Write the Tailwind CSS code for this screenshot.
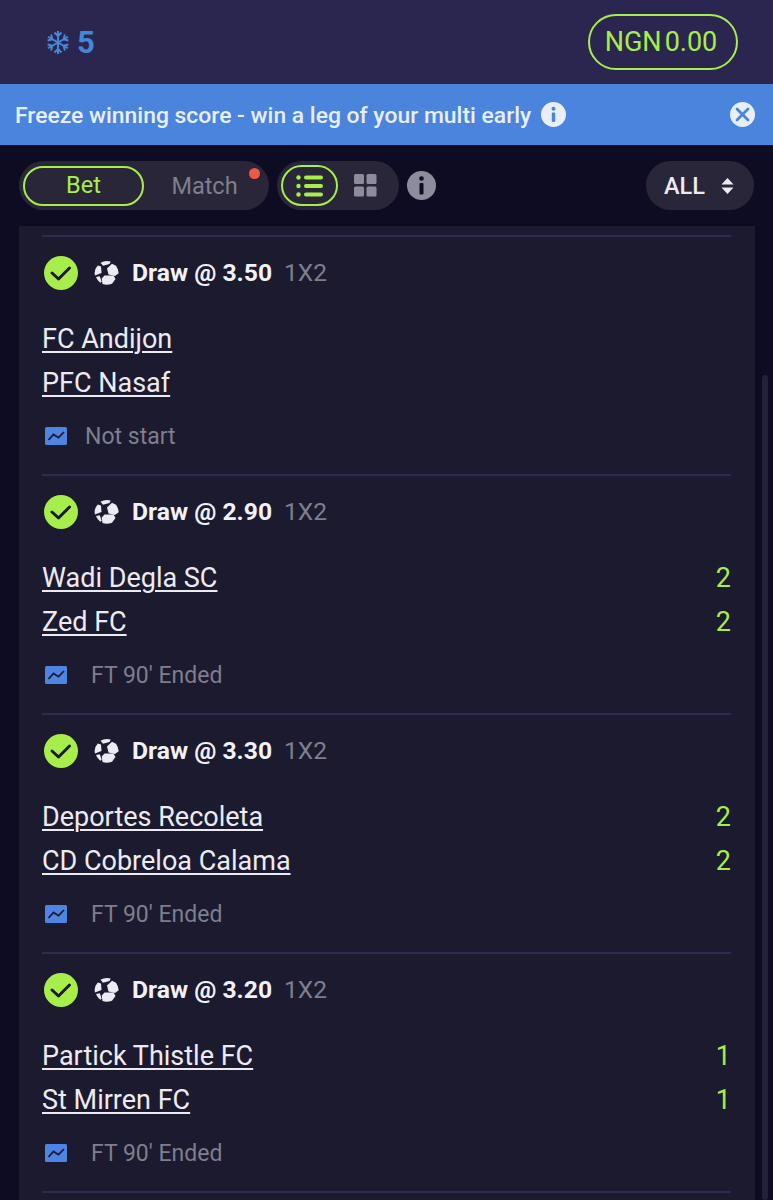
<!DOCTYPE html>
<html lang="en">
<head>
    <meta charset="UTF-8">
    <meta name="viewport" content="width=device-width, initial-scale=1.0">
    <title>My Bets</title>
    <script src="https://cdn.jsdelivr.net/npm/@tailwindcss/browser@4"></script>
</head>
<body class="bg-[#0e0c22] font-['Roboto',sans-serif]">
    <div class="relative h-[1200px] w-[773px] overflow-hidden">
        <!-- Header -->
        <header class="flex h-[84px] items-center justify-between bg-[#2b2650] pl-[46px] pr-[35px]">
            <div class="flex items-center gap-[7px] text-[#4389d6]">
                <svg class="h-[25px] w-[24px]" viewBox="0 0 24 24" fill="none" stroke="currentColor" stroke-width="2">
                    <path d="M12 12V.5M8.500 2l3.500 3.500L15.500 2"/>
                    <path d="M12 12V.5M8.500 2l3.500 3.500L15.500 2" transform="rotate(60 12 12)"/>
                    <path d="M12 12V.5M8.500 2l3.500 3.500L15.500 2" transform="rotate(120 12 12)"/>
                    <path d="M12 12V.5M8.500 2l3.500 3.500L15.500 2" transform="rotate(180 12 12)"/>
                    <path d="M12 12V.5M8.500 2l3.500 3.500L15.500 2" transform="rotate(240 12 12)"/>
                    <path d="M12 12V.5M8.500 2l3.500 3.500L15.500 2" transform="rotate(300 12 12)"/>
                </svg>
                <span class="text-[31px] font-bold leading-none">5</span>
            </div>
            <div class="flex h-[56px] w-[150px] items-center justify-center gap-[3px] rounded-full border-2 border-[#a8ee4a] pr-[4px] text-[27px] text-[#a8ee4a]">
                <span>NGN</span><span>0.00</span>
            </div>
        </header>

        <!-- Banner -->
        <div class="flex h-[61px] items-center bg-[#4a84dd] pl-[15px] pr-[18px] text-[#e9eff9]">
            <span class="pt-[3px] text-[22.900px] font-medium">Freeze winning score - win a leg of your multi early</span>
            <svg class="ml-[10px] h-[25px] w-[25px]" viewBox="0 0 25 25">
                <circle cx="12.500" cy="12.500" r="12.500" fill="#e9eff9"/>
                <circle cx="12.500" cy="6.800" r="2" fill="#4a84dd"/>
                <rect x="10.800" y="10.500" width="3.400" height="9.500" rx="1" fill="#4a84dd"/>
            </svg>
            <svg class="ml-auto h-[25px] w-[25px]" viewBox="0 0 25 25">
                <circle cx="12.500" cy="12.500" r="12.500" fill="#e9eff9"/>
                <path d="M7 7l11 11M18 7L7 18" stroke="#4a84dd" stroke-width="2.800" stroke-linecap="round"/>
            </svg>
        </div>

        <!-- Filters -->
        <div class="flex h-[81px] items-center pl-[19px] pr-[19px]">
            <div class="relative flex h-[49px] w-[250px] items-center rounded-full bg-[#282638] pl-[4px]">
                <div class="flex h-[40px] w-[121px] items-center justify-center rounded-full border-2 border-[#a8ee4a] text-[23.500px] text-[#a8ee4a]">Bet</div>
                <div class="w-[121px] pt-[2px] text-center text-[23.500px] text-[#7f7e8e]">Match</div>
                <span class="absolute left-[230px] top-[7px] h-[11px] w-[11px] rounded-full bg-[#eb5a46]"></span>
            </div>
            <div class="ml-[8px] flex h-[49px] w-[122px] items-center rounded-full bg-[#282638] pl-[4px]">
                <div class="flex h-[41px] w-[57px] items-center justify-center rounded-full border-2 border-[#a8ee4a]">
                    <svg class="h-[24px] w-[27px]" viewBox="0 0 27 24" fill="#a8ee4a">
                        <circle cx="2.500" cy="3.500" r="2.200"/><circle cx="2.500" cy="12" r="2.200"/><circle cx="2.500" cy="20.500" r="2.200"/>
                        <rect x="8" y="1.500" width="19" height="4" rx="2"/><rect x="8" y="10" width="19" height="4" rx="2"/><rect x="8" y="18.500" width="19" height="4" rx="2"/>
                    </svg>
                </div>
                <svg class="ml-[16px] h-[23px] w-[23px]" viewBox="0 0 23 23" fill="#8d8c9c">
                    <rect width="10" height="10" rx="1.500"/><rect x="12.500" width="10" height="10" rx="1.500"/>
                    <rect y="12.500" width="10" height="10" rx="1.500"/><rect x="12.500" y="12.500" width="10" height="10" rx="1.500"/>
                </svg>
            </div>
            <svg class="ml-[8px] h-[29px] w-[29px]" viewBox="0 0 29 29">
                <circle cx="14.500" cy="14.500" r="14.500" fill="#8d8c9c"/>
                <circle cx="14.500" cy="7.500" r="2.300" fill="#0e0c22"/>
                <rect x="12.500" y="12" width="4" height="11.500" rx="1" fill="#0e0c22"/>
            </svg>
            <div class="ml-auto flex h-[49px] w-[108px] items-center rounded-full bg-[#282638] pl-[18px]">
                <span class="pt-[2px] text-[23.500px] font-medium text-[#ecebf3]">ALL</span>
                <svg class="ml-[16px] h-[16px] w-[13px]" viewBox="0 0 13 16" fill="#ecebf3">
                    <path d="M6.500 0l6 6.500H.500zM6.500 16l-6-6.500h12z"/>
                </svg>
            </div>
        </div>

        <!-- Scrollbar -->
        <div class="absolute left-[762px] top-[375px] h-[825px] w-[6px] rounded-full bg-[#22203a]"></div>

        <!-- Bet list -->
        <main class="ml-[19px] w-[736px] bg-[#1b1a2e] pl-[23px] pr-[24px] pt-[9px]">
            <section class="h-[239px] border-t-2 border-[#2e2b50] pt-[18px]">
                <div class="flex h-[36px] items-center">
                    <svg class="ml-[2px] h-[34px] w-[34px]" viewBox="0 0 34 34"><circle cx="17" cy="17" r="17" fill="#a8ee4a"/><path d="M8 17l6.500 6L25.500 12" fill="none" stroke="#1b1a2e" stroke-width="3" stroke-linecap="round" stroke-linejoin="round"/></svg>
                    <svg class="ml-[16px] h-[26px] w-[26px]" viewBox="0 0 26 26" fill="#ecebf3"><path d="M6.500 2.800Q11 0 16.700 1.500L15.500 4 9 5.800z"/><path d="M18 3.800l4 2q2.500 3.500 2.700 7.500L21 16 14.500 14.500 13 8.500z"/><path d="M10.500 15.500h9L21.500 19l-3.500 4.800q-5 1.700-9.500.3L7.700 18.500z"/><path d="M3.800 5.500L7 6.500 7.500 13 1 15.500Q-.5 10 3.800 5.500z"/><path d="M2 17l3.800-.7L7.700 21.800l-1.500 1Q3.300 20.500 2 17z"/></svg>
                    <span class="ml-[12px] text-[24.700px] font-bold text-[#f2f1f7]">Draw @ 3.50</span>
                    <span class="ml-[12px] text-[24.500px] text-[#7f7e8e]">1X2</span>
                </div>
                <div class="mt-[25px] flex h-[44px] items-center justify-between pt-[2px] text-[27px] leading-none text-[#ecebf3]"><span class="underline decoration-2 underline-offset-[3px]">FC Andijon</span></div>
                <div class="flex h-[44px] items-center justify-between pt-[2px] text-[27px] leading-none text-[#ecebf3]"><span class="underline decoration-2 underline-offset-[3px]">PFC Nasaf</span></div>
                <div class="mt-[20px] flex h-[24px] items-center">
                    <svg class="ml-[3px] h-[18px] w-[22px]" viewBox="0 0 22 18"><rect width="22" height="18" rx="1.500" fill="#4f85e2"/><path d="M3.500 13l5-5.500 5 3.200L19 5" fill="none" stroke="#1b1a2e" stroke-width="1.800"/></svg>
                    <span class="ml-[18px] pt-[2px] text-[23px] text-[#7f7e8e]">Not start</span>
                </div>
            </section>

            <section class="h-[239px] border-t-2 border-[#2e2b50] pt-[18px]">
                <div class="flex h-[36px] items-center">
                    <svg class="ml-[2px] h-[34px] w-[34px]" viewBox="0 0 34 34"><circle cx="17" cy="17" r="17" fill="#a8ee4a"/><path d="M8 17l6.500 6L25.500 12" fill="none" stroke="#1b1a2e" stroke-width="3" stroke-linecap="round" stroke-linejoin="round"/></svg>
                    <svg class="ml-[16px] h-[26px] w-[26px]" viewBox="0 0 26 26" fill="#ecebf3"><path d="M6.500 2.800Q11 0 16.700 1.500L15.500 4 9 5.800z"/><path d="M18 3.800l4 2q2.500 3.500 2.700 7.500L21 16 14.500 14.500 13 8.500z"/><path d="M10.500 15.500h9L21.500 19l-3.500 4.800q-5 1.700-9.500.3L7.700 18.500z"/><path d="M3.800 5.500L7 6.500 7.500 13 1 15.500Q-.5 10 3.800 5.500z"/><path d="M2 17l3.800-.7L7.700 21.800l-1.500 1Q3.300 20.500 2 17z"/></svg>
                    <span class="ml-[12px] text-[24.700px] font-bold text-[#f2f1f7]">Draw @ 2.90</span>
                    <span class="ml-[12px] text-[24.500px] text-[#7f7e8e]">1X2</span>
                </div>
                <div class="mt-[25px] flex h-[44px] items-center justify-between pt-[2px] text-[27px] leading-none text-[#ecebf3]"><span class="underline decoration-2 underline-offset-[3px]">Wadi Degla SC</span><span class="text-[#a8ee4a]">2</span></div>
                <div class="flex h-[44px] items-center justify-between pt-[2px] text-[27px] leading-none text-[#ecebf3]"><span class="underline decoration-2 underline-offset-[3px]">Zed FC</span><span class="text-[#a8ee4a]">2</span></div>
                <div class="mt-[20px] flex h-[24px] items-center">
                    <svg class="ml-[3px] h-[18px] w-[22px]" viewBox="0 0 22 18"><rect width="22" height="18" rx="1.500" fill="#4f85e2"/><path d="M3.500 13l5-5.500 5 3.200L19 5" fill="none" stroke="#1b1a2e" stroke-width="1.800"/></svg>
                    <span class="ml-[24px] pt-[2px] text-[23px] text-[#7f7e8e]">FT 90' Ended</span>
                </div>
            </section>

            <section class="h-[239px] border-t-2 border-[#2e2b50] pt-[18px]">
                <div class="flex h-[36px] items-center">
                    <svg class="ml-[2px] h-[34px] w-[34px]" viewBox="0 0 34 34"><circle cx="17" cy="17" r="17" fill="#a8ee4a"/><path d="M8 17l6.500 6L25.500 12" fill="none" stroke="#1b1a2e" stroke-width="3" stroke-linecap="round" stroke-linejoin="round"/></svg>
                    <svg class="ml-[16px] h-[26px] w-[26px]" viewBox="0 0 26 26" fill="#ecebf3"><path d="M6.500 2.800Q11 0 16.700 1.500L15.500 4 9 5.800z"/><path d="M18 3.800l4 2q2.500 3.500 2.700 7.500L21 16 14.500 14.500 13 8.500z"/><path d="M10.500 15.500h9L21.500 19l-3.500 4.800q-5 1.700-9.500.3L7.700 18.500z"/><path d="M3.800 5.500L7 6.500 7.500 13 1 15.500Q-.5 10 3.800 5.500z"/><path d="M2 17l3.800-.7L7.700 21.800l-1.500 1Q3.300 20.500 2 17z"/></svg>
                    <span class="ml-[12px] text-[24.700px] font-bold text-[#f2f1f7]">Draw @ 3.30</span>
                    <span class="ml-[12px] text-[24.500px] text-[#7f7e8e]">1X2</span>
                </div>
                <div class="mt-[25px] flex h-[44px] items-center justify-between pt-[2px] text-[27px] leading-none text-[#ecebf3]"><span class="underline decoration-2 underline-offset-[3px]">Deportes Recoleta</span><span class="text-[#a8ee4a]">2</span></div>
                <div class="flex h-[44px] items-center justify-between pt-[2px] text-[27px] leading-none text-[#ecebf3]"><span class="underline decoration-2 underline-offset-[3px]">CD Cobreloa Calama</span><span class="text-[#a8ee4a]">2</span></div>
                <div class="mt-[20px] flex h-[24px] items-center">
                    <svg class="ml-[3px] h-[18px] w-[22px]" viewBox="0 0 22 18"><rect width="22" height="18" rx="1.500" fill="#4f85e2"/><path d="M3.500 13l5-5.500 5 3.200L19 5" fill="none" stroke="#1b1a2e" stroke-width="1.800"/></svg>
                    <span class="ml-[24px] pt-[2px] text-[23px] text-[#7f7e8e]">FT 90' Ended</span>
                </div>
            </section>

            <section class="h-[239px] border-t-2 border-[#2e2b50] pt-[18px]">
                <div class="flex h-[36px] items-center">
                    <svg class="ml-[2px] h-[34px] w-[34px]" viewBox="0 0 34 34"><circle cx="17" cy="17" r="17" fill="#a8ee4a"/><path d="M8 17l6.500 6L25.500 12" fill="none" stroke="#1b1a2e" stroke-width="3" stroke-linecap="round" stroke-linejoin="round"/></svg>
                    <svg class="ml-[16px] h-[26px] w-[26px]" viewBox="0 0 26 26" fill="#ecebf3"><path d="M6.500 2.800Q11 0 16.700 1.500L15.500 4 9 5.800z"/><path d="M18 3.800l4 2q2.500 3.500 2.700 7.500L21 16 14.500 14.500 13 8.500z"/><path d="M10.500 15.500h9L21.500 19l-3.500 4.800q-5 1.700-9.500.3L7.700 18.500z"/><path d="M3.800 5.500L7 6.500 7.500 13 1 15.500Q-.5 10 3.800 5.500z"/><path d="M2 17l3.800-.7L7.700 21.800l-1.500 1Q3.300 20.500 2 17z"/></svg>
                    <span class="ml-[12px] text-[24.700px] font-bold text-[#f2f1f7]">Draw @ 3.20</span>
                    <span class="ml-[12px] text-[24.500px] text-[#7f7e8e]">1X2</span>
                </div>
                <div class="mt-[25px] flex h-[44px] items-center justify-between pt-[2px] text-[27px] leading-none text-[#ecebf3]"><span class="underline decoration-2 underline-offset-[3px]">Partick Thistle FC</span><span class="text-[#a8ee4a]">1</span></div>
                <div class="flex h-[44px] items-center justify-between pt-[2px] text-[27px] leading-none text-[#ecebf3]"><span class="underline decoration-2 underline-offset-[3px]">St Mirren FC</span><span class="text-[#a8ee4a]">1</span></div>
                <div class="mt-[20px] flex h-[24px] items-center">
                    <svg class="ml-[3px] h-[18px] w-[22px]" viewBox="0 0 22 18"><rect width="22" height="18" rx="1.500" fill="#4f85e2"/><path d="M3.500 13l5-5.500 5 3.200L19 5" fill="none" stroke="#1b1a2e" stroke-width="1.800"/></svg>
                    <span class="ml-[24px] pt-[2px] text-[23px] text-[#7f7e8e]">FT 90' Ended</span>
                </div>
            </section>

            <section class="h-[20px] border-t-2 border-[#2e2b50]"></section>
        </main>
    </div>
</body>
</html>
